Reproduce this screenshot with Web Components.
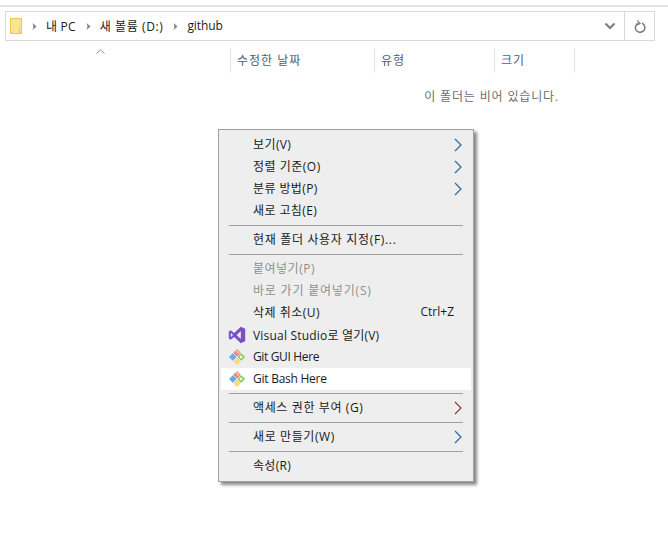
<!DOCTYPE html>
<html lang="ko">
<head>
<meta charset="utf-8">
<title>github</title>
<style>
  html, body { margin: 0; padding: 0; background: #fff; }
  body { width: 668px; height: 537px; overflow: hidden; position: relative; font: 12px "Open Sans", "Noto Sans CJK KR", sans-serif; }
</style>
</head>
<body>
<address-bar>
  <crumb-item style="letter-spacing:.2px">내 PC</crumb-item>
  <crumb-item style="letter-spacing:.6px">새 볼륨 (D:)</crumb-item>
  <crumb-item style="letter-spacing:-.1px">github</crumb-item>
</address-bar>
<column-headers></column-headers>
<context-menu>
  <menu-item arrow style="letter-spacing:.4px">보기(V)</menu-item>
  <menu-item arrow style="letter-spacing:.5px">정렬 기준(O)</menu-item>
  <menu-item arrow style="letter-spacing:.4px">분류 방법(P)</menu-item>
  <menu-item style="letter-spacing:.4px">새로 고침(E)</menu-item>
  <menu-line></menu-line>
  <menu-item style="letter-spacing:.67px">현재 폴더 사용자 지정(F)...</menu-item>
  <menu-line></menu-line>
  <menu-item disabled style="letter-spacing:.5px">붙여넣기(P)</menu-item>
  <menu-item disabled style="letter-spacing:.8px">바로 가기 붙여넣기(S)</menu-item>
  <menu-item shortcut="Ctrl+Z" style="letter-spacing:.5px">삭제 취소(U)</menu-item>
  <menu-item latin style="letter-spacing:.2px">
    <svg slot="icon" width="18" height="18" viewBox="0 0 18 18"><path fill="#7a50c8" fill-rule="evenodd" d="M12.800.8 17.200 2.800v12.400l-4.400 2-6.600-6.200-3.600 2.800L.8 12.600V5.400L2.600 4.200l3.600 2.800zM2.800 6.800v4.400L5 9zm10-1.800L8.600 9l4.200 4z"/></svg>
    Visual Studio로 열기(V)
  </menu-item>
  <menu-item latin style="letter-spacing:-.35px"><git-icon slot="icon"></git-icon>Git GUI Here</menu-item>
  <menu-item latin active style="letter-spacing:-.25px"><git-icon slot="icon"></git-icon>Git Bash Here</menu-item>
  <menu-line></menu-line>
  <menu-item arrow="red" style="letter-spacing:.62px">액세스 권한 부여 (G)</menu-item>
  <menu-line></menu-line>
  <menu-item arrow style="letter-spacing:.6px">새로 만들기(W)</menu-item>
  <menu-line></menu-line>
  <menu-item style="letter-spacing:.3px">속성(R)</menu-item>
</context-menu>

<script>
class AddressBar extends HTMLElement {
  constructor() {
    super();
    this.attachShadow({mode: "open"});
  }
  connectedCallback() {
    this.shadowRoot.innerHTML = `
    <style>
      :host { display: block; border-top: 2px solid #e4e4e4; margin-top: 5px; padding: 4px 13px 0 5px; }
      .bar { display: flex; align-items: center; height: 28px; border: 1px solid #d9d9d9; }
      .folder { margin-left: 4px; flex: none; }
      .path { display: flex; flex: 1; align-items: center; }
      .down { width: 29px; height: 28px; display: flex; align-items: center; justify-content: center; }
      .refresh { width: 29px; height: 28px; border-left: 1px solid #d9d9d9; display: flex; align-items: center; justify-content: center; }
    </style>
    <div class="bar">
      <svg class="folder" width="12" height="16" viewBox="0 0 12 16"><rect x=".5" y=".5" width="11" height="15" fill="#fde38f" stroke="#ecc74f"/><path d="M11.500 10H9.500v5.500" fill="#fff3c4" stroke="#ecc74f"/></svg>
      <div class="path"><slot></slot></div>
      <div class="down"><svg width="12" height="8" viewBox="0 0 12 8"><path d="M1.500 1.500 6 6l4.500-4.500" fill="none" stroke="#7c7c7c" stroke-width="2"/></svg></div>
      <div class="refresh"><svg width="12" height="13" viewBox="0 0 12 13"><path d="M4.500 3.200A4.700 4.700 0 1 0 8 3.300" fill="none" stroke="#7a7a7a" stroke-width="1.500"/><path d="M3.300 .6 6 3.300 3.300 5" fill="none" stroke="#7a7a7a" stroke-width="1.300"/></svg></div>
    </div>`;
  }
}
customElements.define("address-bar", AddressBar);

class CrumbItem extends HTMLElement {
  constructor() {
    super();
    this.attachShadow({mode: "open"});
  }
  connectedCallback() {
    this.shadowRoot.innerHTML = `
    <style>
      :host { display: flex; align-items: center; color: #1a1a1a; font-size: 12px; }
      svg { margin: 0 9px 0 10px; flex: none; }
      span { padding-bottom: 1px; }
    </style>
    <svg width="5" height="7" viewBox="0 0 5 7"><path d="M.5 0 4.500 3.500.5 7l1-3.500z" fill="#808080"/></svg><span><slot></slot></span>`;
  }
}
customElements.define("crumb-item", CrumbItem);

class ColumnHeaders extends HTMLElement {
  constructor() {
    super();
    this.attachShadow({mode: "open"});
  }
  connectedCallback() {
    this.shadowRoot.innerHTML = `
    <style>
      :host { display: block; color: #4c607a; font-size: 12px; }
      .row { display: flex; height: 25px; margin-top: 7px; padding-left: 230px; position: relative; }
      .col { border-left: 1px solid #e5e5e5; padding-left: 6px; line-height: 25px; box-sizing: border-box; letter-spacing: 1px; }
      .end { width: 1px; background: #e5e5e5; }
      .sort { position: absolute; left: 96px; top: 1px; }
      .empty { text-align: right; margin: 14px 109px 0 0; color: #6d6d6d; line-height: 20px; letter-spacing: .85px; }
    </style>
    <div class="row">
      <svg class="sort" width="9" height="5" viewBox="0 0 9 5"><path d="M.5 4.500 4.500.8l4 3.700" fill="none" stroke="#8d8d8d"/></svg>
      <div class="col" style="width:144px">수정한 날짜</div>
      <div class="col" style="width:120px">유형</div>
      <div class="col" style="width:80px">크기</div>
      <div class="end"></div>
    </div>
    <div class="empty">이 폴더는 비어 있습니다.</div>`;
  }
}
customElements.define("column-headers", ColumnHeaders);

class ContextMenu extends HTMLElement {
  constructor() {
    super();
    this.attachShadow({mode: "open"});
  }
  connectedCallback() {
    this.shadowRoot.innerHTML = `
    <style>
      :host { position: absolute; left: 218px; top: 129px; width: 256px; box-sizing: border-box; display: block; padding: 4px 2px 4px 2px; background: #eeeeee; border: 1px solid #a0a0a0; box-shadow: 3px 3px 3px #8a8a8a; }
    </style>
    <slot></slot>`;
  }
}
customElements.define("context-menu", ContextMenu);

class MenuItem extends HTMLElement {
  constructor() {
    super();
    this.attachShadow({mode: "open"});
  }
  connectedCallback() {
    const arrow = this.getAttribute("arrow");
    const color = arrow === "red" ? "#8a3b3b" : "#2a6a9a";
    const shortcut = this.getAttribute("shortcut");
    this.shadowRoot.innerHTML = `
    <style>
      :host { display: flex; align-items: center; height: 22px; color: #1a1a1a; font-size: 12px; white-space: nowrap; }
      :host([disabled]) { color: #8f8f8f; }
      :host([active]) { background: #fff; }
      .icon { width: 32px; display: flex; justify-content: center; flex: none; }
      .label { flex: 1; padding-bottom: 3px; }
      :host([latin]) .label { padding-bottom: 1px; }
      .short { margin-right: 17px; padding-bottom: 3px; letter-spacing: 0; }
      .arrow { margin-right: 9px; }
    </style>
    <div class="icon"><slot name="icon"></slot></div>
    <div class="label"><slot></slot></div>
    ${shortcut ? `<div class="short">${shortcut}</div>` : ""}
    ${arrow !== null ? `<svg class="arrow" width="8" height="14" viewBox="0 0 8 14"><path d="M1 1l6 6-6 6" fill="none" stroke="${color}" stroke-width="1.200"/></svg>` : ""}`;
  }
}
customElements.define("menu-item", MenuItem);

class MenuLine extends HTMLElement {
  constructor() {
    super();
    this.attachShadow({mode: "open"});
  }
  connectedCallback() {
    this.shadowRoot.innerHTML = `
    <style>
      :host { display: block; height: 1px; margin: 3px 8px 3px 8px; background: #a0a0a0; }
    </style>`;
  }
}
customElements.define("menu-line", MenuLine);

class GitIcon extends HTMLElement {
  constructor() {
    super();
    this.attachShadow({mode: "open"});
  }
  connectedCallback() {
    this.shadowRoot.innerHTML = `
    <style>
      :host { display: block; width: 16px; height: 16px; }
      svg { display: block; }
    </style>
    <svg width="16" height="16" viewBox="0 0 16 16">
      <path fill="#ee8579" d="M8 0l4 4-4 4-4-4z"/>
      <path fill="#66a9f4" d="M4 4l4 4-4 4-4-4z"/>
      <path fill="#f6dc78" d="M8 8l4 4-4 4-4-4z"/>
      <path fill="#7fce55" d="M12 4l4 4-4 4-4-4z"/>
      <path d="M8 8 4 4M8 8l-4 4M8 8l4 4M8 8l4-4" stroke="#eeeeee" stroke-width=".8"/>
      <circle cx="12" cy="8" r="1.400" fill="#fff"/>
      <path d="M7 1.500 10 4.500" stroke="#fbd5cf" stroke-width="1.200"/>
    </svg>`;
  }
}
customElements.define("git-icon", GitIcon);
</script>
</body>
</html>
